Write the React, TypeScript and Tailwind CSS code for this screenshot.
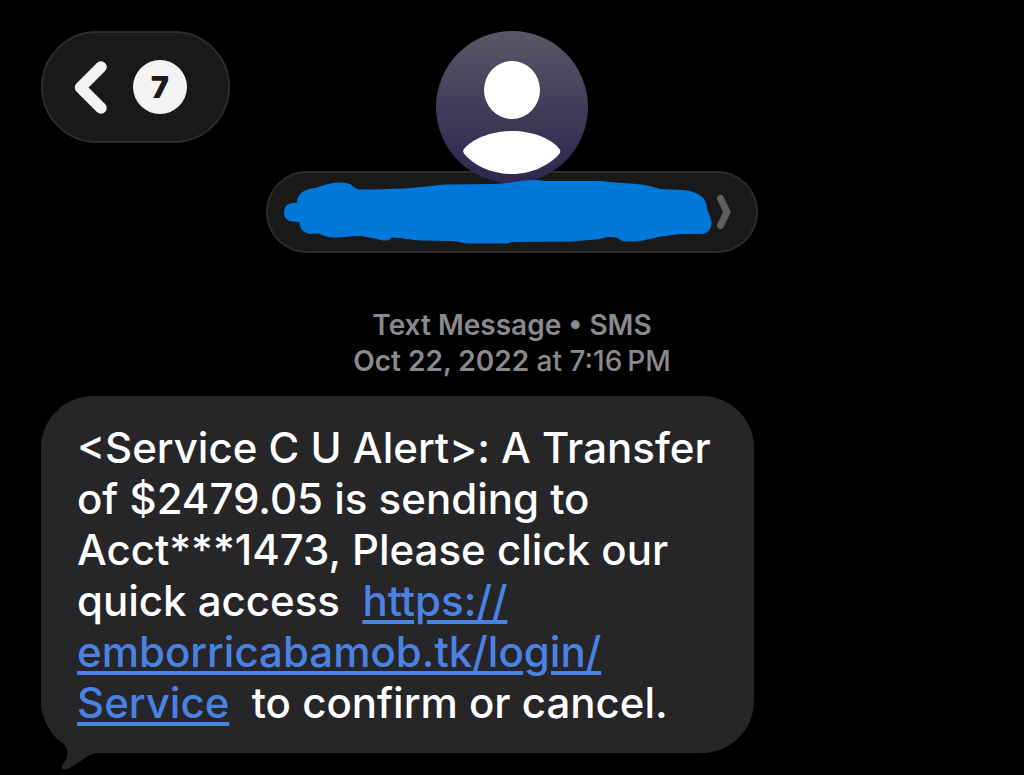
const BackButton = ({ unread }: { unread: number }) => (
    <button
        type="button"
        aria-label={`Back, ${unread} unread`}
        className="flex h-28 items-center gap-[26px] rounded-full border-2 border-[#2c2c2c] bg-[#191919] pl-8 pr-[41px]"
    >
        <svg className="overflow-visible" width="32" height="54" viewBox="0 0 32 54" fill="none">
            <path d="M26 7 L5.5 27.5 L26 48" stroke="#f3f3f3" strokeWidth="11.5" strokeLinecap="round" strokeLinejoin="round" />
        </svg>
        <span className="flex size-[54px] items-center justify-center rounded-full bg-[#f3f3f3] text-[30px] font-black text-[#191919]">
            {unread}
        </span>
    </button>
);

const Avatar = () => (
    <div className="relative z-10 size-[152px] rounded-full bg-linear-to-b from-[#5b5667] via-[#433c58] to-[#2f264f]">
        <svg width="152" height="152" viewBox="436 31 152 152" fill="#fff">
            <ellipse cx="512" cy="90" rx="28" ry="29" />
            <path d="M464 149 C472 139 491 131 512 131 C533 131 552 139 559.500 149 Q561 151.500 559.500 153.500 C550 165 532 174 512 174 C491 174 473 165 464 153.500 Q462.500 151 464 149 Z" />
        </svg>
    </div>
);

const ContactPill = () => (
    <button
        type="button"
        aria-label="Contact details"
        className="-mt-3 flex h-[82px] w-[492px] max-w-full items-center gap-1 rounded-full border-2 border-[#2c2c2c] bg-[#191919] pl-[15px]"
    >
        {/* scribbled-out name */}
        <svg className="relative z-20" width="430" height="66" viewBox="283 178 430 66" fill="#0078d9">
            <path d="M284 212 C284 206 287 202 293 202 L297 201.500 C297 194 303 188 315 187 C322 185 329 182 337 181.500 Q345 181 350 183 C354 186 356 188 359 188.500 C375 188.500 390 188 405 187.500 C420 186 432 185 445 183.500 L493 183 C503 183 512 181 525 179.500 Q535 178.500 545 180 L602 180 C615 182 630 182 645 184 Q654 186 660 188 L682 189 C696 190 704 195 706.500 203 C707 211 711 215 711.500 222 Q711 232 702 233 L682 233 C672 234 665 235 658 236 C650 238 643 240 635 240.500 L625 240.500 C619 239 618 236 611 236 C604 236 602 238 595 238.500 C587 239 580 240 572 240.500 L512 241 Q508 242.500 504 242.500 L468 242.500 C462 242 457 240 450 240 L422 239.500 C412 239 402 237 392 236.500 C390 239 388 239.500 385 239.500 C380 239.500 378 238 375 237.500 C369 236.500 364 235 358 235 C350 235 343 237 335 236.500 C328 236.500 324 235 319 232.500 L310 233 C304 232 299 228 299.500 221 L293 220.500 C287 220 284 217 284 212 Z" />
        </svg>
        <svg width="14" height="36" viewBox="0 0 14 36" fill="none">
            <path d="M3.500 4.500 L10 18 L3.500 31.500" stroke="#5f5f5f" strokeWidth="7" strokeLinecap="round" strokeLinejoin="round" />
        </svg>
    </button>
);

const MessageBubble = () => (
    <div className="relative w-[713px] max-w-full rounded-[52px] bg-[#262628] px-9 pb-[25px] pt-[26px]">
        <p className="whitespace-pre-wrap text-[42px] font-medium leading-[51px] text-white">
            {"<Service C U Alert>: A Transfer of $2479.05 is sending to Acct***1473, Please click our quick access  "}
            <a href="#" className="text-[#4a82e4] underline decoration-4 underline-offset-4">
                https://<wbr />emborricabamob.tk/login/<wbr />Service
            </a>
            {"  to confirm or cancel."}
        </p>
        <svg className="absolute -bottom-[18px] left-4" width="46" height="36" viewBox="57 735 46 36" fill="#262628">
            <path d="M57 737 C66 744 70 751 66 759 C64 764 60 767 63 769.500 C68 771 82 760 88 756 Q93 753 102 753 L102 735 L57 735 Z" />
        </svg>
    </div>
);

export default function App() {
    return (
        <div className="min-h-screen bg-black pt-[31px] font-['Inter',sans-serif]">
            <header className="grid grid-cols-[1fr_auto_1fr] items-start px-[41px]">
                <div className="w-0">
                    <BackButton unread={7} />
                </div>
                <div className="flex flex-col items-center">
                    <Avatar />
                    <ContactPill />
                </div>
            </header>

            <main className="px-[41px] pb-[22px]">
                <div className="mb-[17px] mt-[54px] text-center text-[28px] leading-9 text-[#8a898f]">
                    <p className="font-semibold">Text Message • SMS</p>
                    <p className="font-medium">
                        <span className="font-semibold">Oct 22, 2022</span> at 7:16{"\u2009"}PM
                    </p>
                </div>
                <MessageBubble />
            </main>
        </div>
    );
}
